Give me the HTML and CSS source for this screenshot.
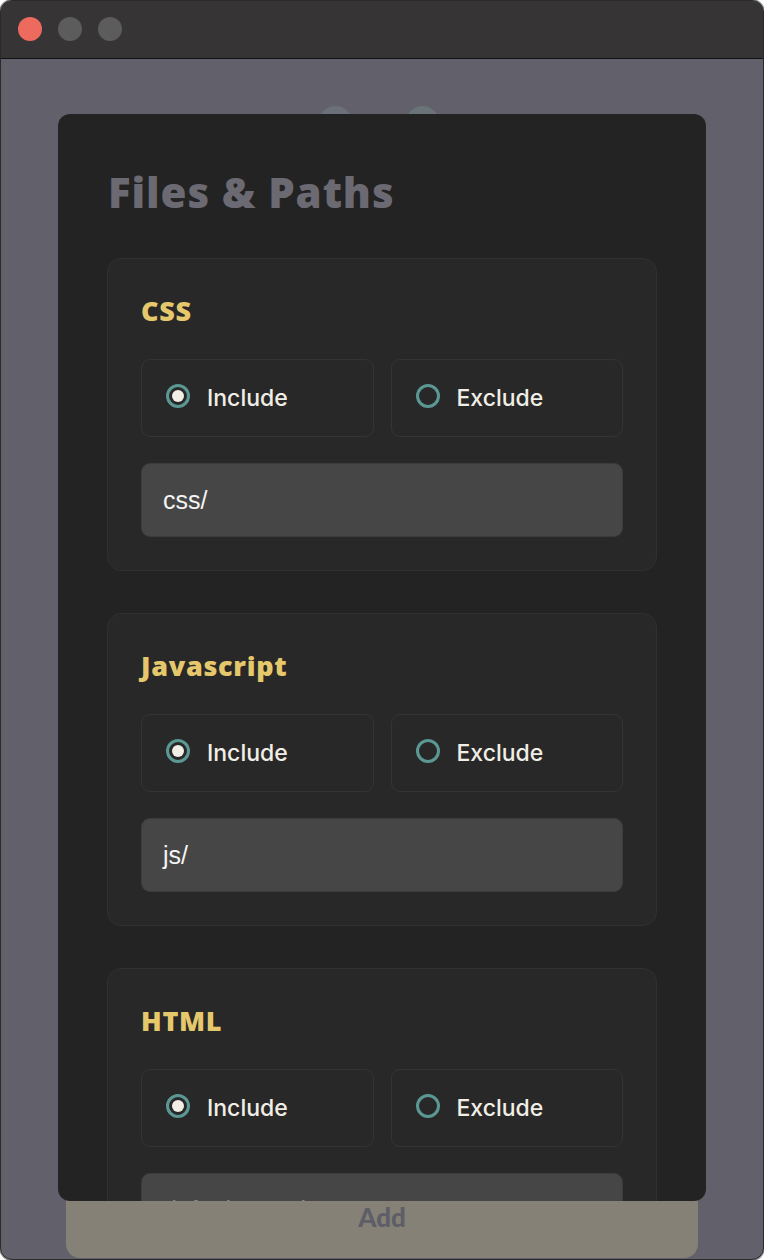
FILE: index.html
```html
<!DOCTYPE html>
<html>
<head>
<meta charset="utf-8">
<link rel="stylesheet" href="styles.css">
</head>
<body>
<div class="window">
  <div class="titlebar">
    <span class="light red"></span>
    <span class="light"></span>
    <span class="light"></span>
  </div>
  <div class="content">
    <div class="steps">
      <span class="step"></span>
      <span class="step step-2"></span>
    </div>
    <div class="add-btn">Add</div>

    <div class="modal">
      <h1 class="modal-title">Files &amp; Paths</h1>
      <div class="sections">
        <section class="group">
          <h2 class="group-title">CSS</h2>
          <div class="choices">
            <label class="choice"><span class="radio checked"></span><span class="choice-label">Include</span></label>
            <label class="choice"><span class="radio"></span><span class="choice-label">Exclude</span></label>
          </div>
          <div class="field">css/</div>
        </section>
        <section class="group">
          <h2 class="group-title">Javascript</h2>
          <div class="choices">
            <label class="choice"><span class="radio checked"></span><span class="choice-label">Include</span></label>
            <label class="choice"><span class="radio"></span><span class="choice-label">Exclude</span></label>
          </div>
          <div class="field">js/</div>
        </section>
        <section class="group">
          <h2 class="group-title">HTML</h2>
          <div class="choices">
            <label class="choice"><span class="radio checked"></span><span class="choice-label">Include</span></label>
            <label class="choice"><span class="radio"></span><span class="choice-label">Exclude</span></label>
          </div>
          <div class="field placeholder">default.template</div>
        </section>
      </div>
    </div>
  </div>
</div>
</body>
</html>
```
FILE: styles.css
```css
* { box-sizing: border-box; }
html, body {
  margin: 0;
  padding: 0;
  background: #ffffff;
}
body {
  width: 764px;
  height: 1260px;
  font-family: "Inter", "Liberation Sans", sans-serif;
}
.window {
  width: 764px;
  height: 1260px;
  border: 1px solid #2a2a2a;
  border-radius: 12px;
  overflow: hidden;
  display: flex;
  flex-direction: column;
  background: #62616b;
  box-shadow: 0 0 0 1px #9a9a9a;
}
.titlebar {
  height: 58px;
  flex: none;
  background: #363435;
  border-bottom: 1px solid #121212;
  display: flex;
  align-items: center;
  gap: 16px;
  padding-left: 17px;
  padding-bottom: 1px;
}
.light {
  width: 24px;
  height: 24px;
  border-radius: 50%;
  background: #5c5c5c;
}
.light.red { background: #ed6a5e; }

.content {
  position: relative;
  flex: 1;
  display: flex;
  flex-direction: column;
}
.steps {
  display: flex;
  justify-content: center;
  gap: 54px;
  padding-top: 47px;
  padding-right: 6px;
}
.step {
  width: 33px;
  height: 33px;
  border-radius: 50%;
  background: #6b707a;
}
.step-2 { background: #6a7478; }
.add-btn {
  margin: auto 65px 1px;
  height: 80px;
  background: #858177;
  border-radius: 14px;
  display: flex;
  align-items: flex-end;
  justify-content: center;
  padding-bottom: 26px;
  font-family: "Lato", sans-serif;
  font-weight: 900;
  font-size: 26px;
  line-height: 30px;
  color: #5e5d68;
}

.modal {
  position: absolute;
  top: 55px;
  left: 57px;
  width: 648px;
  height: 1087px;
  background: #232323;
  border-radius: 12px;
  overflow: hidden;
  padding: 53px 49px 0;
}
.modal-title {
  margin: 0 0 41px 1px;
  font-family: "Open Sans", sans-serif;
  font-weight: 800;
  font-size: 42px;
  line-height: 50px;
  letter-spacing: 0.9px;
  color: #6b6a73;
}
.sections {
  display: flex;
  flex-direction: column;
  gap: 42px;
}
.group {
  background: #282828;
  border: 1px solid #303030;
  border-radius: 14px;
  padding: 36px 33px 33px;
}
.group-title {
  margin: 0 0 32px;
  font-family: "Open Sans", sans-serif;
  font-weight: 800;
  font-size: 27px;
  line-height: 32px;
  letter-spacing: 0.7px;
  color: #e6c86c;
}
.choices {
  display: grid;
  grid-template-columns: 1fr 1fr;
  gap: 17px;
}
.choice {
  height: 78px;
  border: 1px solid #343434;
  border-radius: 9px;
  display: flex;
  align-items: center;
  gap: 17px;
  padding: 0 0 0 24px;
}
.radio {
  width: 24px;
  height: 24px;
  margin-bottom: 4px;
  border-radius: 50%;
  border: 3px solid #5b9893;
  display: flex;
  align-items: center;
  justify-content: center;
}
.radio.checked::after {
  content: "";
  width: 12px;
  height: 12px;
  border-radius: 50%;
  background: #f1eee6;
}
.choice-label {
  font-family: "Inter", sans-serif;
  font-weight: 500;
  font-size: 23px;
  color: #f1eee6;
}
.field {
  margin-top: 26px;
  height: 74px;
  background: #464646;
  border: 1px solid #3c3c3c;
  border-radius: 9px;
  padding: 0 21px;
  display: flex;
  align-items: center;
  font-family: "Liberation Sans", "Arial", sans-serif;
  font-size: 25px;
  color: #f4f4f4;
}
.field.placeholder { color: #8a8a8a; }
```
